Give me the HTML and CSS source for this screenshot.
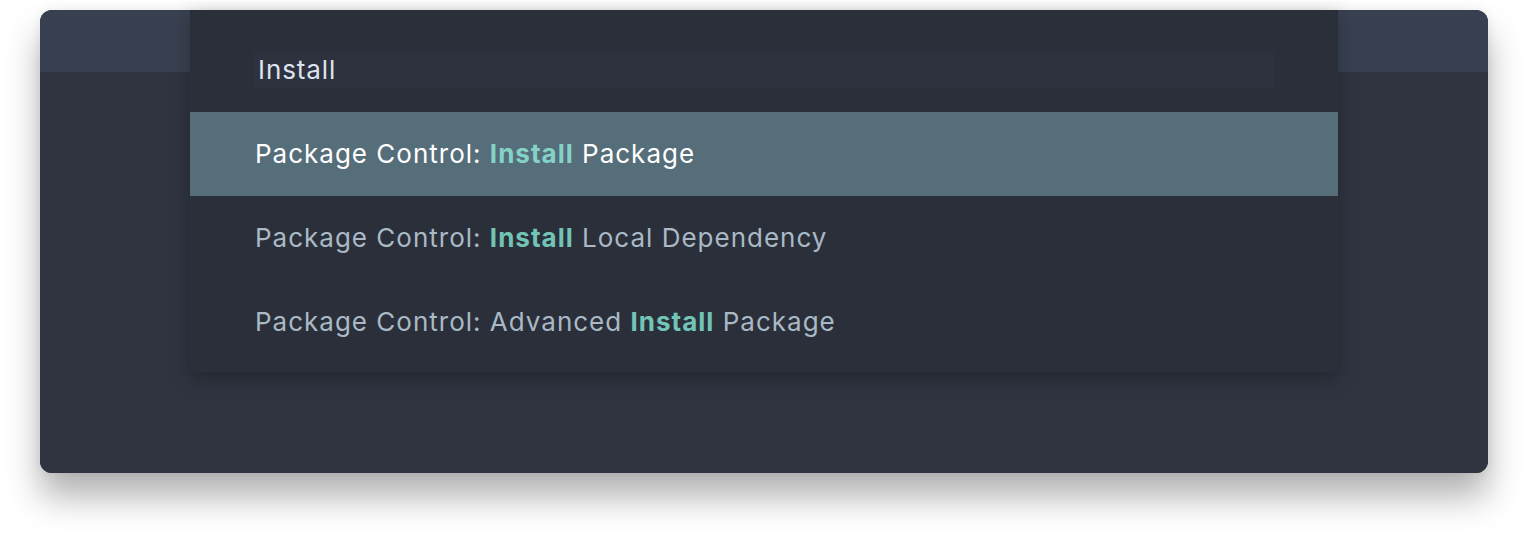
FILE: index.html
```html
<!DOCTYPE html>
<html>
<head>
<meta charset="utf-8">
<link rel="stylesheet" href="styles.css">
</head>
<body>
<div class="window">
  <div class="titlebar"></div>
  <div class="editor"></div>
  <div class="palette">
    <div class="search">
      <div class="input">Install</div>
    </div>
    <div class="list">
      <div class="item selected">Package Control: <b>Install</b> Package</div>
      <div class="item">Package Control: <b>Install</b> Local Dependency</div>
      <div class="item">Package Control: Advanced <b>Install</b> Package</div>
    </div>
  </div>
</div>
</body>
</html>
```
FILE: styles.css
```css
html, body {
  margin: 0;
  padding: 0;
  background: #ffffff;
}
html {
  min-height: 544px;
}
body {
  min-height: 544px;
  box-sizing: border-box;
  padding: 10px 40px 0 40px;
  font-family: "Inter", "Noto Sans", sans-serif;
}
.window {
  position: relative;
  width: 1448px;
  height: 463px;
  border-radius: 12px;
  background: #2f3440;
  box-shadow: 0 24px 34px rgba(0, 0, 0, 0.3), 0 0 12px rgba(0, 0, 0, 0.07);
  display: flex;
  flex-direction: column;
}
.titlebar {
  height: 62px;
  background: #394051;
  border-radius: 12px 12px 0 0;
}
.editor {
  flex: 1;
  background: #2f3440;
  border-radius: 0 0 12px 12px;
}
.palette {
  position: absolute;
  left: 150px;
  top: 0;
  width: 1148px;
  height: 362px;
  background: #2b2f3a;
  border-radius: 0 0 8px 8px;
  box-shadow: 0 6px 20px rgba(0, 0, 0, 0.28);
  display: flex;
  flex-direction: column;
}
.search {
  padding: 42px 64px 24px 64px;
}
.input {
  height: 36px;
  background: #2e323e;
  color: #dde3ee;
  font-size: 26px;
  letter-spacing: 0.9px;
  line-height: 36px;
  padding-left: 4px;
}
.list {
  display: flex;
  flex-direction: column;
}
.item {
  height: 84px;
  line-height: 84px;
  padding-left: 65px;
  font-size: 26px;
  letter-spacing: 1px;
  color: #a9b9c6;
}
.item b {
  color: #72c4b6;
  font-weight: 700;
}
.item.selected {
  background: #566e7a;
  color: #ffffff;
}
.item.selected b {
  color: #84d2c5;
}
```
